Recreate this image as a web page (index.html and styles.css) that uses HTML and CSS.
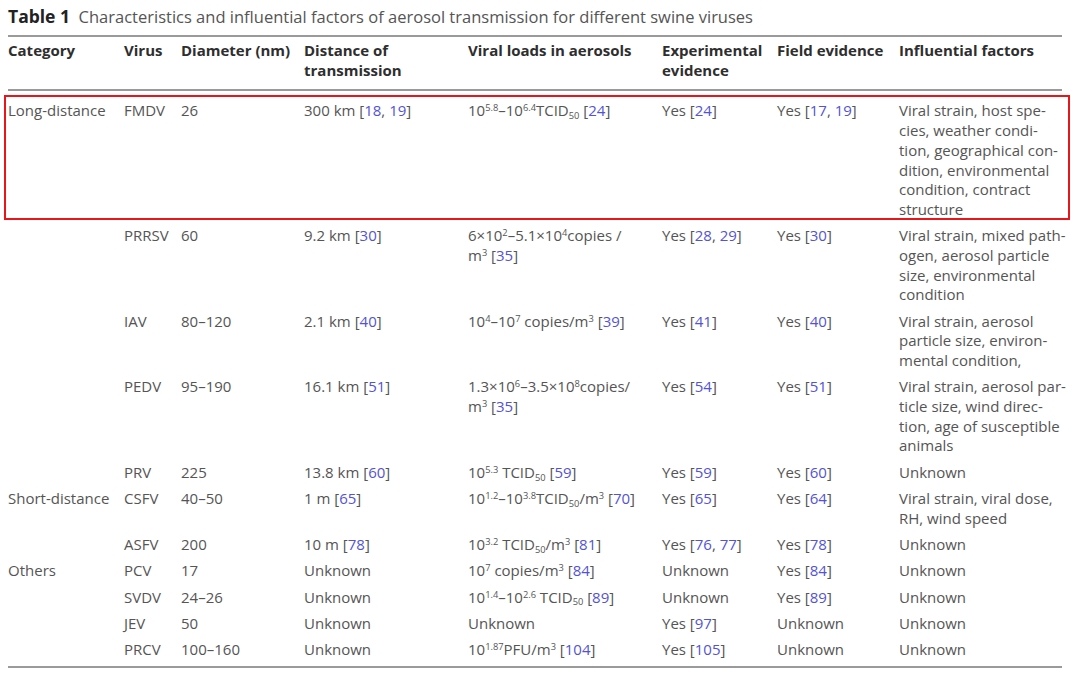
FILE: index.html
```html
<!DOCTYPE html>
<html>
<head>
<meta charset="utf-8">
<link rel="stylesheet" href="styles.css">
</head>
<body>
<div class="page">
  <div class="caption"><b>Table 1</b>&nbsp; Characteristics and influential factors of aerosol transmission for different swine viruses</div>
  <div class="table">
    <div class="row head">
      <div>Category</div><div>Virus</div><div>Diameter (nm)</div><div>Distance of<br>transmission</div><div>Viral loads in aerosols</div><div>Experimental<br>evidence</div><div>Field evidence</div><div>Influential factors</div>
    </div>
    <div class="row hl">
      <div>Long-distance</div><div>FMDV</div><div>26</div><div>300 km [<a>18</a>, <a>19</a>]</div><div>10<sup>5.8</sup>–10<sup>6.4</sup>TCID<sub>50</sub> [<a>24</a>]</div><div>Yes [<a>24</a>]</div><div>Yes [<a>17</a>, <a>19</a>]</div><div>Viral strain, host spe-<br>cies, weather condi-<br>tion, geographical con-<br>dition, environmental<br>condition, contract<br>structure</div>
    </div>
    <div class="row">
      <div></div><div>PRRSV</div><div>60</div><div>9.2 km [<a>30</a>]</div><div>6×10<sup>2</sup>–5.1×10<sup>4</sup>copies /<br>m<sup>3</sup> [<a>35</a>]</div><div>Yes [<a>28</a>, <a>29</a>]</div><div>Yes [<a>30</a>]</div><div>Viral strain, mixed path-<br>ogen, aerosol particle<br>size, environmental<br>condition</div>
    </div>
    <div class="row">
      <div></div><div>IAV</div><div>80–120</div><div>2.1 km [<a>40</a>]</div><div>10<sup>4</sup>–10<sup>7</sup> copies/m<sup>3</sup> [<a>39</a>]</div><div>Yes [<a>41</a>]</div><div>Yes [<a>40</a>]</div><div>Viral strain, aerosol<br>particle size, environ-<br>mental condition,</div>
    </div>
    <div class="row">
      <div></div><div>PEDV</div><div>95–190</div><div>16.1 km [<a>51</a>]</div><div>1.3×10<sup>6</sup>–3.5×10<sup>8</sup>copies/<br>m<sup>3</sup> [<a>35</a>]</div><div>Yes [<a>54</a>]</div><div>Yes [<a>51</a>]</div><div>Viral strain, aerosol par-<br>ticle size, wind direc-<br>tion, age of susceptible<br>animals</div>
    </div>
    <div class="row">
      <div></div><div>PRV</div><div>225</div><div>13.8 km [<a>60</a>]</div><div>10<sup>5.3</sup> TCID<sub>50</sub> [<a>59</a>]</div><div>Yes [<a>59</a>]</div><div>Yes [<a>60</a>]</div><div>Unknown</div>
    </div>
    <div class="row">
      <div>Short-distance</div><div>CSFV</div><div>40–50</div><div>1 m [<a>65</a>]</div><div>10<sup>1.2</sup>–10<sup>3.8</sup>TCID<sub>50</sub>/m<sup>3</sup> [<a>70</a>]</div><div>Yes [<a>65</a>]</div><div>Yes [<a>64</a>]</div><div>Viral strain, viral dose,<br>RH, wind speed</div>
    </div>
    <div class="row">
      <div></div><div>ASFV</div><div>200</div><div>10 m [<a>78</a>]</div><div>10<sup>3.2</sup> TCID<sub>50</sub>/m<sup>3</sup> [<a>81</a>]</div><div>Yes [<a>76</a>, <a>77</a>]</div><div>Yes [<a>78</a>]</div><div>Unknown</div>
    </div>
    <div class="row">
      <div>Others</div><div>PCV</div><div>17</div><div>Unknown</div><div>10<sup>7</sup> copies/m<sup>3</sup> [<a>84</a>]</div><div>Unknown</div><div>Yes [<a>84</a>]</div><div>Unknown</div>
    </div>
    <div class="row">
      <div></div><div>SVDV</div><div>24–26</div><div>Unknown</div><div>10<sup>1.4</sup>–10<sup>2.6</sup> TCID<sub>50</sub> [<a>89</a>]</div><div>Unknown</div><div>Yes [<a>89</a>]</div><div>Unknown</div>
    </div>
    <div class="row">
      <div></div><div>JEV</div><div>50</div><div>Unknown</div><div>Unknown</div><div>Yes [<a>97</a>]</div><div>Unknown</div><div>Unknown</div>
    </div>
    <div class="row last">
      <div></div><div>PRCV</div><div>100–160</div><div>Unknown</div><div>10<sup>1.87</sup>PFU/m<sup>3</sup> [<a>104</a>]</div><div>Yes [<a>105</a>]</div><div>Unknown</div><div>Unknown</div>
    </div>
  </div>
</div>
</body>
</html>
```
FILE: styles.css
```css
html, body {
  margin: 0;
  padding: 0;
  background: #ffffff;
}
body {
  font-family: "Open Sans", Lato, sans-serif;
  color: #555555;
}
.page {
  padding: 6px 8px 0 8px;
  width: 1054px;
}
.caption {
  font-size: 16.5px;
  line-height: 20px;
  color: #555555;
  margin-bottom: 8px;
  white-space: nowrap;
}
.caption b {
  font-size: 17.5px;
  color: #222222;
  font-weight: 700;
}
.table {
  border-top: 2px solid #9a9a9a;
  border-bottom: 2px solid #9a9a9a;
}
.row {
  display: grid;
  grid-template-columns: 116px 57px 123px 164px 194px 115px 122px 1fr;
  font-size: 15px;
  line-height: 19.7px;
  padding: 6px 0 0.6px 0;
  position: relative;
  white-space: nowrap;
}
.row.head {
  font-weight: 700;
  color: #2e2e2e;
  padding: 4px 0 9px 0;
  border-bottom: 2px solid #9a9a9a;
  margin-bottom: 4px;
}
.row.hl::after {
  content: "";
  position: absolute;
  top: 0;
  bottom: 0;
  left: -4px;
  right: -8px;
  border: 2px solid #e8161b;
  pointer-events: none;
}
.row.last {
  padding-bottom: 6px;
}
a {
  color: #5353d6;
  text-decoration: none;
}
sup, sub {
  font-size: 0.62em;
  line-height: 0;
  position: relative;
  vertical-align: baseline;
}
sup {
  top: -0.55em;
}
sub {
  top: 0.3em;
}
```
